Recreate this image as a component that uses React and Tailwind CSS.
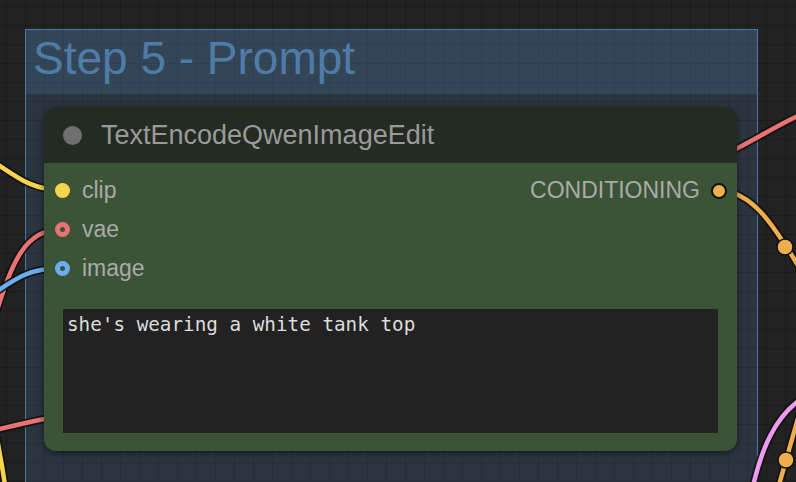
import React from 'react';

const inputs = [
    { name: 'clip', kind: 'filled', color: 'bg-[#f6d54a]' },
    { name: 'vae', kind: 'ring', color: 'border-[#e77373]' },
    { name: 'image', kind: 'ring', color: 'border-[#6aaef0]' },
];

// wire = black outline + coloured core, like the graph canvas draws them
function Wire({ d, color }) {
    return (
        <>
            <path d={d} fill="none" stroke="#111" strokeWidth="8" strokeLinecap="round" opacity="0.9" />
            <path d={d} fill="none" stroke={color} strokeWidth="4.5" strokeLinecap="round" />
        </>
    );
}

function Wires() {
    return (
        <svg className="absolute inset-0 w-[796px] h-[482px]" viewBox="0 0 796 482">
            <Wire d="M -30 148 C 10 168, 22 190, 62 190" color="#f6d54a" />
            <Wire d="M -8 325 C 10 272, 20 229, 62 229" color="#e77373" />
            <Wire d="M -25 306 C 10 284, 22 268, 62 268" color="#6aaef0" />
            <Wire d="M -10 431 C 20 425, 40 418, 80 413" color="#e77373" />
            <Wire d="M -3 438 C 0 455, 3 470, 6 492" color="#f6d54a" />
            <Wire d="M 700 166 C 740 150, 770 128, 806 112" color="#e77373" />
            <Wire d="M 719 190 C 752 192, 772 222, 802 272" color="#f0ad4e" />
            <Wire d="M 750 500 C 760 450, 775 414, 806 396" color="#ee9cf0" />
            <Wire d="M 777 492 L 802 404" color="#f0ad4e" />
            <circle cx="785" cy="247" r="8" fill="#f0ad4e" stroke="#111" strokeWidth="1.5" />
            <circle cx="786" cy="460" r="8" fill="#f0ad4e" stroke="#111" strokeWidth="1.5" />
        </svg>
    );
}

export default function App() {
    return (
        <div className="relative w-[796px] h-[482px] overflow-hidden bg-[#222222] bg-[linear-gradient(to_right,#1b1b1b_1px,transparent_1px),linear-gradient(to_bottom,#1b1b1b_1px,transparent_1px)] bg-[size:19px_19px] bg-[position:6px_6px] font-['Liberation_Sans',Arial,sans-serif]">
            {/* group */}
            <div className="absolute left-[25px] top-[29px] w-[733px] h-[480px] border border-[#4b79a6] flex flex-col">
                <div className="h-[64px] bg-[rgba(83,137,188,0.35)] pl-[7px] pt-[5px] text-[46px] leading-[46px] text-[#4f7ca7] whitespace-nowrap">
                    Step 5 - Prompt
                </div>
                <div className="flex-1 bg-[rgba(79,129,184,0.2)]"></div>
            </div>

            <Wires />

            {/* node */}
            <div className="absolute left-[44px] top-[107px] w-[693px] h-[344px] rounded-[12px] overflow-hidden bg-[#3b5436] shadow-[0_2px_6px_rgba(0,0,0,0.5)] flex flex-col">
                <div className="h-[56px] bg-[#242b22] flex items-center pl-[19px] gap-[19px]">
                    <div className="w-[19px] h-[19px] rounded-full bg-[#6f6f6f]"></div>
                    <span className="text-[27px] leading-none text-[#9a9a9a]">TextEncodeQwenImageEdit</span>
                </div>

                <div className="pt-[8px] flex flex-col">
                    {inputs.map((inp, idx) => (
                        <div key={inp.name} className="h-[39px] flex items-center pl-[11px] pr-[10px]">
                            {inp.kind === 'filled' ? (
                                <div className={`w-[15px] h-[15px] rounded-full ${inp.color}`}></div>
                            ) : (
                                <div className={`w-[15px] h-[15px] rounded-full border-[5px] ${inp.color} bg-[#3b5436]`}></div>
                            )}
                            <span className="ml-[12px] text-[23px] leading-none text-[#aaaaaa]">{inp.name}</span>
                            {idx === 0 && (
                                <div className="ml-auto flex items-center gap-[11px]">
                                    <span className="text-[23px] leading-none text-[#aaaaaa]">CONDITIONING</span>
                                    <div className="w-[16px] h-[16px] rounded-full bg-[#f0ad4e] border-2 border-[#111]"></div>
                                </div>
                            )}
                        </div>
                    ))}
                </div>

                <div className="mt-[21px] mx-[19px] h-[124px] bg-[#222222] px-[4px] pt-[4px] text-[19.3px] leading-[23px] text-[#dddddd] font-['DejaVu_Sans_Mono',monospace] whitespace-pre">
                    she's wearing a white tank top
                </div>
            </div>
        </div>
    );
}
